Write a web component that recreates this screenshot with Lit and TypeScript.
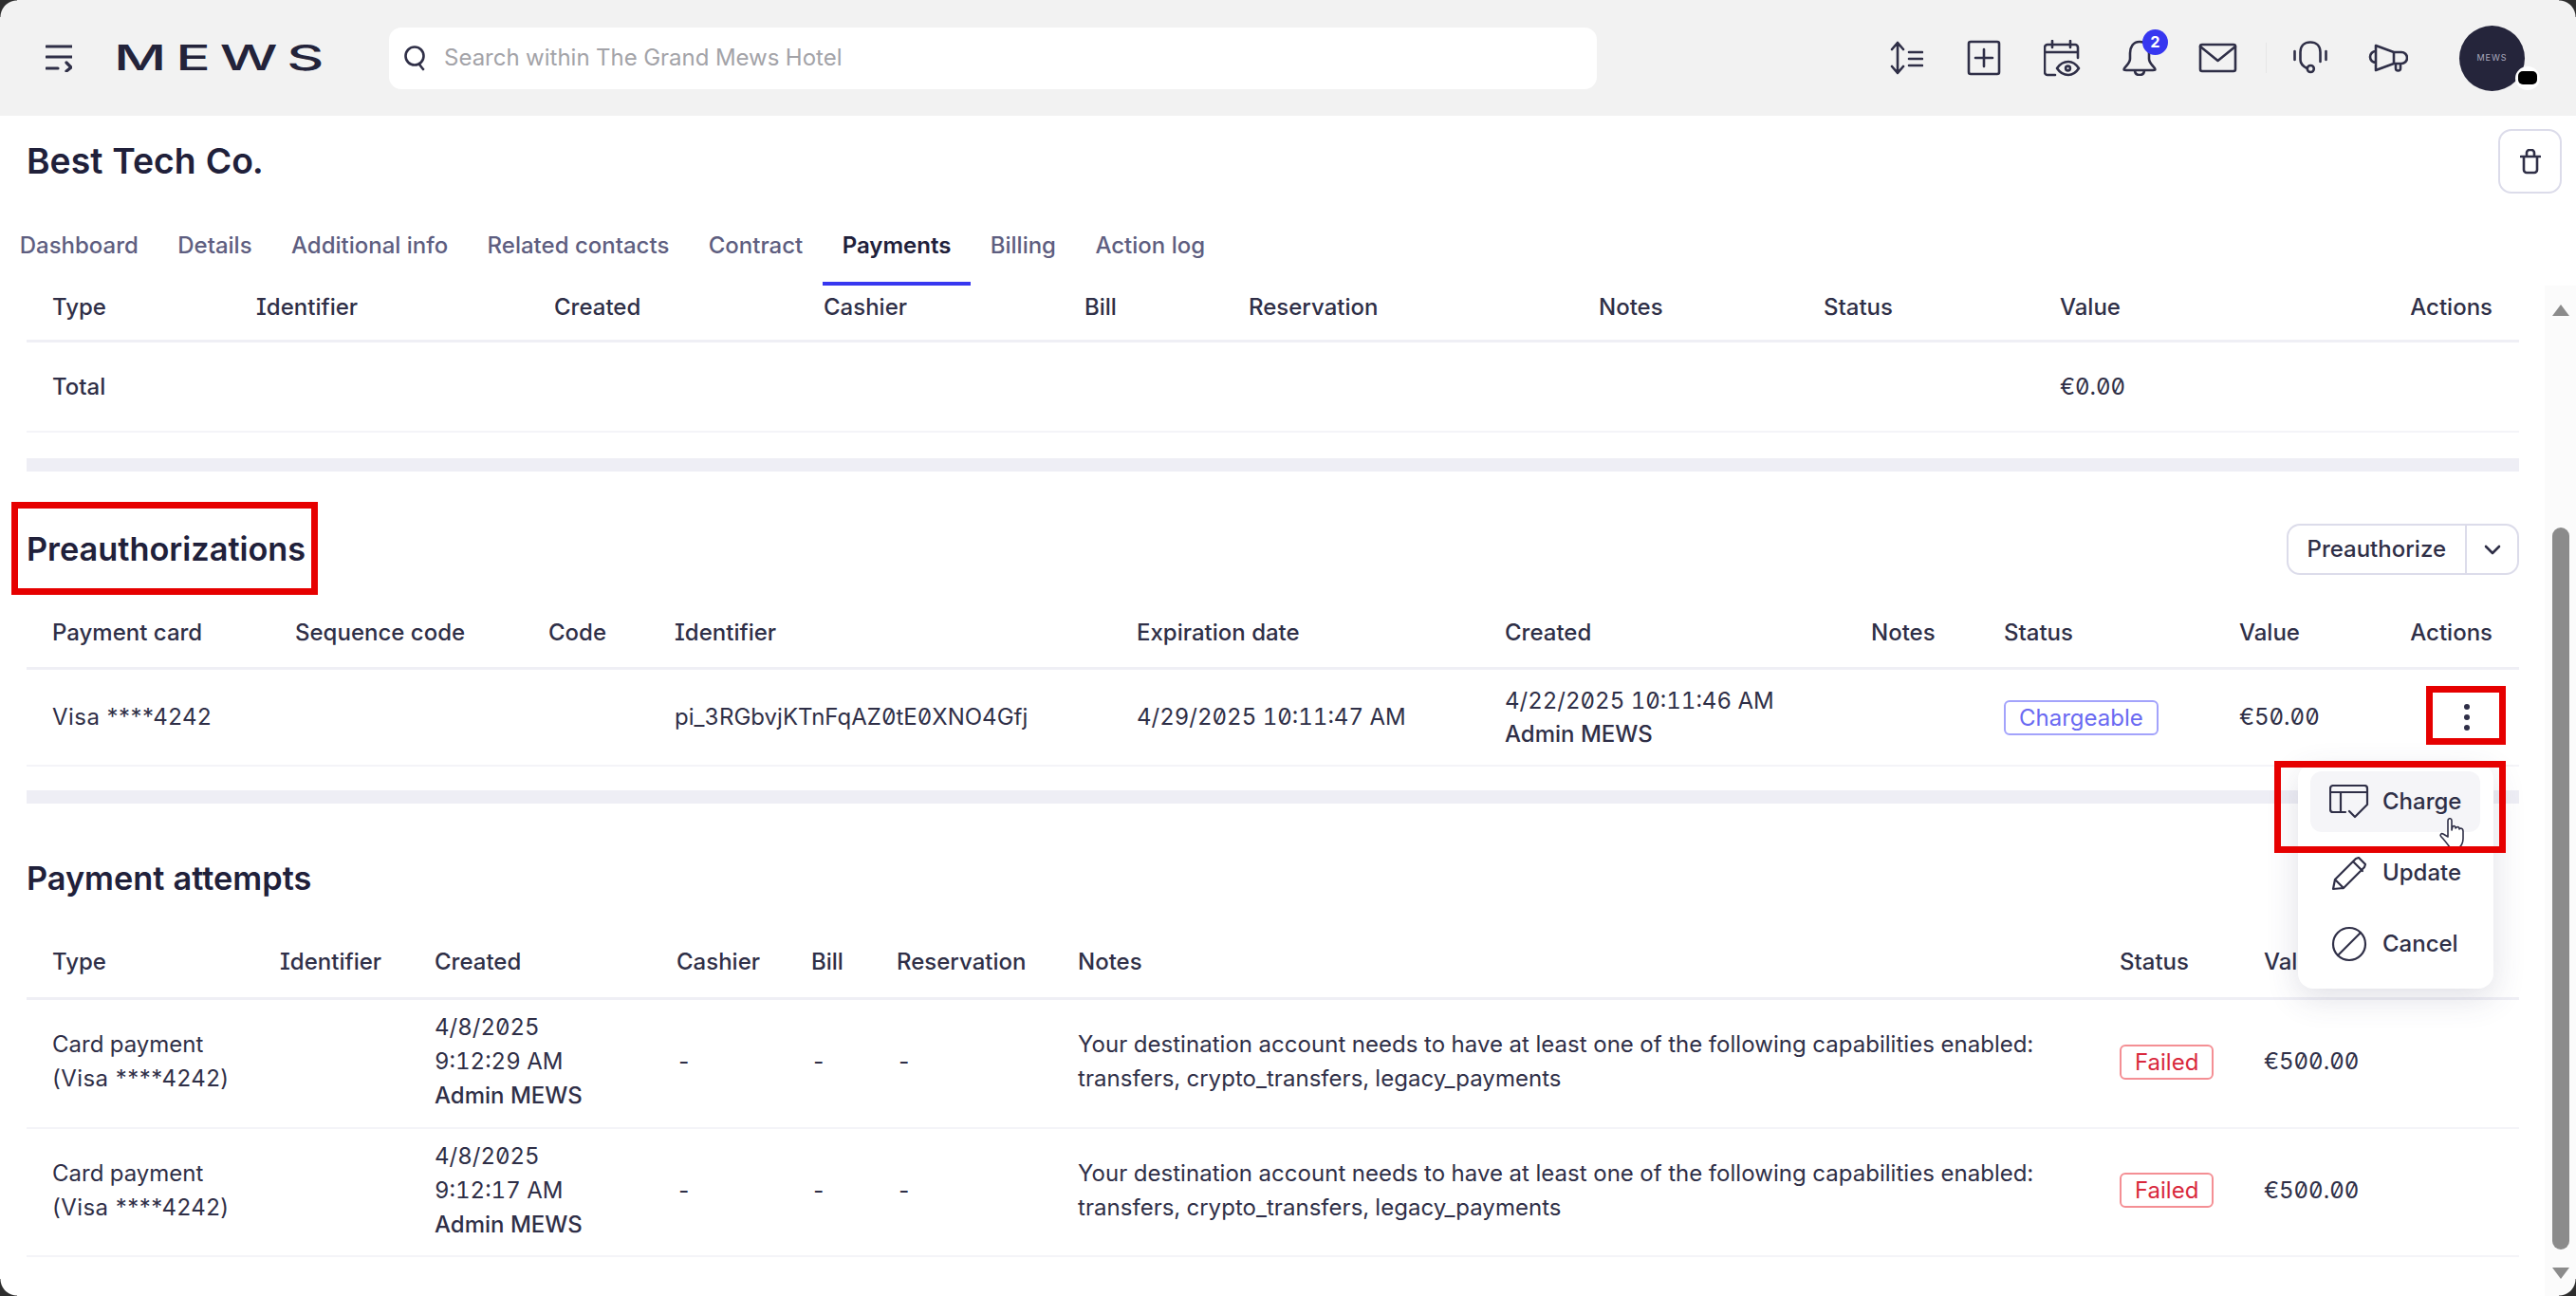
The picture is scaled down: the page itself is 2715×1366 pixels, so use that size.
import { LitElement, css, html, svg } from 'lit'
import { customElement } from 'lit/decorators.js'

const ink = '#2f2f47'

const icons = {
  menu: svg`<path d="M1 3h27M1 14h27M1 26h12M22 20l5 5-5 4"/>`,
  search: svg`<circle cx="12" cy="11" r="9.5"/><path d="M17 20l4 5"/>`,
  sort: svg`<path d="M9 2v32M3 9l6-7 6 7M3 27l6 7 6-7M21 12h14M21 19h14M21 26h14"/>`,
  plus: svg`<rect x="2" y="2" width="32" height="34" rx="2"/><path d="M18 10v18M9 19h18"/>`,
  calendar: svg`<path d="M12 37H4a3 3 0 0 1-3-3V8a3 3 0 0 1 3-3h29a3 3 0 0 1 3 3v11M1 13h35M9 1v7M28 1v7"/><path d="M14 30c3-4.500 7-7 12-7s8 2.500 11 7c-3 4.500-6 7-11 7s-9-2.500-12-7z"/><circle cx="25.500" cy="30" r="2.400"/>`,
  bell: svg`<path d="M18 2c-7 0-10 6-10 12v6c0 4-3 6-6 10-1 2 0 2 2 2h28c2 0 3 0 2-2-3-4-6-6-6-10v-6c0-6-3-12-10-12zM13 32c0 4 2 5 5 5s5-1 5-5"/>`,
  mail: svg`<rect x="2" y="2" width="37" height="28" rx="2"/><path d="M2 4l18.500 15L39 4"/>`,
  headset: svg`<path d="M7.500 20v-8C7.500 5 12 1.500 18 1.500S28.500 5 28.500 12v10M7.500 20c0 4 3 7 7 9M1.500 11v9M34.500 11v9"/><circle cx="18.300" cy="29.500" r="3.500"/>`,
  megaphone: svg`<path d="M8 2l19 7h8a6 6 0 0 1 0 12h-8L8 28zM27 9v12M8 8a6 6 0 0 0 0 12M29 21v5a2.500 2.500 0 0 0 5 0v-5"/>`,
  trash: svg`<path d="M1 8h20M7 8V4a3 3 0 0 1 3-3h2a3 3 0 0 1 3 3v4M4 8v14a3 3 0 0 0 3 3h8a3 3 0 0 0 3-3V8"/>`,
  chevron: svg`<path d="M2 2l7 7 7-7"/>`,
  charge: svg`<path d="M40 21V4a3 3 0 0 0-3-3H4a3 3 0 0 0-3 3v22a3 3 0 0 0 3 3h13M1 8h39M12 8v21M21 28l6 6 13-13"/>`,
  pencil: svg`<path d="M2 35l2-10L26 3l3-1 7 7-1 3-22 22zM4 25l9 9M23 6l10 10"/>`,
  cancel: svg`<circle cx="19" cy="19" r="17"/><path d="M7 31L31 7"/>`,
}

type Cell = string | ReturnType<typeof html>

const stacked = (...lines: Cell[]) =>
  html`${lines.map((l) => html`<div>${l}</div>`)}`

const card = (text: string) => html`<span class="card">${text}</span>`

@customElement('app-root')
export class AppRoot extends LitElement {
  static styles = css`
    :host {
      display: block;
      position: relative;
      width: 2715px;
      height: 1366px;
      overflow: hidden;
      background: #fff;
      color: #2f2f47;
      font-family: Inter, 'Noto Sans', sans-serif;
      font-size: 24px;
      line-height: 30px;
      font-feature-settings: 'tnum', 'zero', 'cv08';
    }
    svg {
      display: block;
      fill: none;
      stroke: currentColor;
      stroke-width: 2.600px;
      stroke-linecap: round;
      stroke-linejoin: round;
    }

    .top {
      display: flex;
      align-items: center;
      height: 122px;
      padding-left: 48px;
      background: #f2f2f2;
    }
    .top .menu-ic {
      width: 28px;
      height: 30px;
      stroke-width: 3.200px;
    }
    .logo {
      width: 220px;
      margin-left: 44px;
      color: #23233a;
      font-size: 37px;
      line-height: 40px;
      font-weight: 500;
      letter-spacing: 6px;
      white-space: nowrap;
    }
    .logo span {
      display: inline-block;
      transform: scaleX(1.64);
      transform-origin: left center;
    }
    .search {
      display: flex;
      align-items: center;
      gap: 18px;
      width: 1273px;
      height: 65px;
      margin-left: 70px;
      padding-left: 15px;
      box-sizing: border-box;
      border-radius: 13px;
      background: #fff;
      color: #a3a3a8;
    }
    .search svg {
      width: 25px;
      height: 27px;
      color: #2f2f47;
    }
    .tools {
      display: flex;
      align-items: center;
      margin-left: auto;
      margin-right: 54px;
    }
    .tool {
      position: relative;
      display: flex;
      align-items: center;
      justify-content: center;
      width: 82px;
    }
    .badge {
      position: absolute;
      left: 44px;
      top: -11px;
      width: 27px;
      height: 27px;
      border-radius: 50%;
      background: #3737f0;
      color: #fff;
      font-size: 16px;
      line-height: 27px;
      font-weight: 700;
      text-align: center;
    }
    .sep {
      width: 1px;
      height: 32px;
      margin: 0 5px 0 10px;
      background: #e6e6e6;
    }
    .avatar {
      position: relative;
      display: flex;
      align-items: center;
      justify-content: center;
      width: 69px;
      height: 69px;
      margin-left: 34px;
      border-radius: 50%;
      background: #25253b;
      color: #a9a9bd;
      font-size: 9px;
      letter-spacing: 1px;
    }
    .avatar i {
      position: absolute;
      right: -16px;
      bottom: 1px;
      display: flex;
      align-items: center;
      justify-content: center;
      width: 26px;
      height: 25px;
      border-radius: 50%;
      background: #fff;
    }
    .avatar i::after {
      content: '';
      width: 20px;
      height: 14px;
      border-radius: 5px;
      background: #000;
    }

    .title {
      display: flex;
      align-items: center;
      justify-content: space-between;
      height: 96px;
      padding: 0 15px 0 28px;
    }
    h1 {
      margin: 0;
      font-size: 37.300px;
      line-height: 44px;
      font-weight: 600;
      color: #20203a;
    }
    .square {
      display: flex;
      align-items: center;
      justify-content: center;
      width: 67px;
      height: 68px;
      box-sizing: border-box;
      border: 2px solid #dcdcea;
      border-radius: 14px;
    }
    .tabs {
      display: flex;
      height: 83px;
      box-sizing: border-box;
    }
    .tab {
      padding: 26px 20.700px 0;
      color: #5e5e80;
      font-weight: 500;
    }
    .tab.on {
      color: #20203a;
      font-weight: 600;
      border-bottom: 4px solid #3737f0;
    }

    .main {
      display: flex;
      height: 1065px;
    }
    .content {
      flex: 1;
      min-width: 0;
      padding: 0 27px 0 28px;
    }
    .rail {
      display: flex;
      flex-direction: column;
      align-items: center;
      width: 33px;
      background: #fbfbfb;
    }
    .thumb {
      width: 18px;
      height: 761px;
      margin-top: 223px;
      border-radius: 9px;
      background: #8b8b8b;
    }
    .up,
    .down {
      width: 0;
      height: 0;
      border-left: 9px solid transparent;
      border-right: 9px solid transparent;
    }
    .up {
      margin-top: 20px;
      border-bottom: 12px solid #8b8b8b;
    }
    .down {
      margin-top: 19px;
      border-top: 12px solid #8b8b8b;
    }

    .row {
      display: grid;
      align-items: center;
      padding: 0 28px 0 27px;
    }
    .pay { grid-template-columns: 215px 314px 284px 275px 173px 369px 237px 249px 1fr auto; }
    .pre { grid-template-columns: 256px 267px 133px 487px 388px 386px 140px 248px 1fr auto; }
    .att { grid-template-columns: 240px 163px 255px 142px 90px 191px 1098px 152px 1fr; }
    .head {
      padding-bottom: 21px;
      border-bottom: 3px solid #efeff5;
      font-weight: 500;
    }
    .body {
      border-bottom: 2px solid #f4f4f8;
    }
    .pay.head { padding-top: 8px; padding-bottom: 19px; }
    .pay.body { height: 95px; padding-top: 1px; box-sizing: border-box; }
    .pre.head { margin-top: 46px; }
    .pre.body { height: 102px; box-sizing: border-box; }
    .att.head { margin-top: 51px; padding-bottom: 22px; }
    .att.body { padding-top: 11px; padding-bottom: 14.600px; line-height: 36px; }
    .stack { line-height: 35px; }
    .by { font-weight: 500; }
    .card { font-feature-settings: 'cv08'; letter-spacing: 0.450px; }
    .note { letter-spacing: 0.040px; }
    .bar {
      height: 14px;
      background: #eeeef5;
    }
    .bar.first { margin-top: 27px; }
    .bar.second { margin-top: 25px; }
    .sec-head {
      display: flex;
      align-items: center;
      justify-content: space-between;
      margin-top: 55px;
    }
    h2 {
      margin: 0;
      font-size: 34.300px;
      line-height: 44px;
      font-weight: 600;
      color: #20203a;
    }
    h2.second { margin-top: 57px; }
    .split {
      display: flex;
      align-items: stretch;
      height: 54px;
      box-sizing: border-box;
      border: 2px solid #dcdcea;
      border-radius: 14px;
      font-weight: 500;
    }
    .split span {
      display: flex;
      align-items: center;
      padding: 0 20px;
      border-right: 2px solid #dcdcea;
    }
    .split div {
      display: flex;
      align-items: center;
      justify-content: center;
      width: 53px;
    }
    .tag {
      display: inline-block;
      height: 37px;
      padding: 0 14px;
      box-sizing: border-box;
      border: 2px solid #a3a3fb;
      border-radius: 6px;
      color: #6a6af2;
      line-height: 33px;
    }
    .tag.bad {
      border-color: #f48f94;
      color: #d9293d;
    }
    .kebab {
      display: flex;
      flex-direction: column;
      gap: 5px;
      padding-right: 24px;
    }
    .kebab b {
      width: 6px;
      height: 6px;
      border-radius: 50%;
      background: #2f2f47;
    }

    .popup {
      position: absolute;
      left: 2422px;
      top: 805px;
      width: 206px;
      height: 237px;
      box-sizing: border-box;
      padding: 8px 14px 0 13px;
      border-radius: 16px;
      background: #fff;
      box-shadow: 0 10px 34px rgba(60, 60, 100, 0.16);
    }
    .item {
      display: flex;
      align-items: center;
      height: 64px;
      margin-bottom: 11px;
      border-radius: 12px;
      font-weight: 500;
    }
    .item.on { background: #f5f5f8; }
    .item .ic {
      display: flex;
      justify-content: center;
      width: 76px;
      padding-left: 5px;
      box-sizing: border-box;
    }
    .item svg { stroke-width: 2.200px; }
    .cursor {
      position: absolute;
      left: 2571px;
      top: 862px;
      width: 28px;
      height: 32px;
      stroke-width: 1.600px;
    }
    .mark {
      position: absolute;
      box-sizing: border-box;
      border: 7px solid #e60000;
    }
    .mark.a { left: 12px; top: 529px; width: 323px; height: 98px; }
    .mark.b { left: 2557px; top: 723px; width: 84px; height: 62px; }
    .mark.c { left: 2397px; top: 802px; width: 244px; height: 97px; }
    .corner {
      position: absolute;
      width: 18px;
      height: 18px;
    }
    .tl { left: 0; top: 0; background: radial-gradient(circle at 100% 100%, transparent 17px, #2e2e2e 18px); }
    .tr { right: 0; top: 0; background: radial-gradient(circle at 0 100%, transparent 17px, #2e2e2e 18px); }
    .bl { left: 0; bottom: 0; background: radial-gradient(circle at 100% 0, transparent 17px, #2e2e2e 18px); }
    .br { right: 0; bottom: 0; background: radial-gradient(circle at 0 0, transparent 17px, #2e2e2e 18px); }
  `

  private icon(name: keyof typeof icons, w: number, h: number) {
    return html`<svg width=${w} height=${h} viewBox="0 0 ${w} ${h}" style="color:${ink}">${icons[name]}</svg>`
  }

  private row(kind: string, cells: Cell[]) {
    return html`<div class="row ${kind}">
      ${cells.map((c) => html`<div>${c}</div>`)}
    </div>`
  }

  private tool(name: keyof typeof icons, w: number, h: number, badge = '') {
    return html`<div class="tool">
      ${this.icon(name, w, h)}
      ${badge ? html`<span class="badge">${badge}</span>` : ''}
    </div>`
  }

  private attempt(time: string) {
    return this.row('att body', [
      stacked('Card payment', card('(Visa ****4242)')),
      '',
      html`<div>4/8/2025</div><div>${time}</div><div class="by">Admin MEWS</div>`,
      '-',
      '-',
      '-',
      html`<div class="note">${stacked(
        'Your destination account needs to have at least one of the following capabilities enabled:',
        'transfers, crypto_transfers, legacy_payments',
      )}</div>`,
      html`<span class="tag bad">Failed</span>`,
      '€500.00',
    ])
  }

  render() {
    const tabs = ['Dashboard', 'Details', 'Additional info', 'Related contacts', 'Contract', 'Payments', 'Billing', 'Action log']
    return html`
      <div class="top">
        <svg class="menu-ic" width="28" height="30" viewBox="0 0 28 30">${icons.menu}</svg>
        <div class="logo"><span>MEWS</span></div>
        <div class="search">
          <svg viewBox="0 0 25 27">${icons.search}</svg>
          <span>Search within The Grand Mews Hotel</span>
        </div>
        <div class="tools">
          ${this.tool('sort', 36, 36)}
          ${this.tool('plus', 36, 38)}
          ${this.tool('calendar', 39, 39)}
          ${this.tool('bell', 36, 38, '2')}
          ${this.tool('mail', 41, 32)}
          <div class="sep"></div>
          ${this.tool('headset', 36, 36)}
          ${this.tool('megaphone', 42, 30)}
          <div class="avatar">MEWS<i></i></div>
        </div>
      </div>

      <div class="title">
        <h1>Best Tech Co.</h1>
        <div class="square">${this.icon('trash', 22, 27)}</div>
      </div>
      <div class="tabs">
        ${tabs.map((t) => html`<div class="tab ${t === 'Payments' ? 'on' : ''}">${t}</div>`)}
      </div>

      <div class="main">
        <div class="content">
          ${this.row('pay head', ['Type', 'Identifier', 'Created', 'Cashier', 'Bill', 'Reservation', 'Notes', 'Status', 'Value', 'Actions'])}
          ${this.row('pay body', [html`<span class="by">Total</span>`, '', '', '', '', '', '', '', '€0.00', ''])}
          <div class="bar first"></div>

          <div class="sec-head">
            <h2>Preauthorizations</h2>
            <div class="split">
              <span>Preauthorize</span>
              <div>${this.icon('chevron', 18, 11)}</div>
            </div>
          </div>
          ${this.row('pre head', ['Payment card', 'Sequence code', 'Code', 'Identifier', 'Expiration date', 'Created', 'Notes', 'Status', 'Value', 'Actions'])}
          ${this.row('pre body', [
            card('Visa ****4242'),
            '',
            '',
            'pi_3RGbvjKTnFqAZ0tE0XNO4Gfj',
            '4/29/2025 10:11:47 AM',
            html`<div class="stack"><div>4/22/2025 10:11:46 AM</div><div class="by">Admin MEWS</div></div>`,
            '',
            html`<span class="tag">Chargeable</span>`,
            '€50.00',
            html`<div class="kebab"><b></b><b></b><b></b></div>`,
          ])}
          <div class="bar second"></div>

          <h2 class="second">Payment attempts</h2>
          ${this.row('att head', ['Type', 'Identifier', 'Created', 'Cashier', 'Bill', 'Reservation', 'Notes', 'Status', 'Value'])}
          ${this.attempt('9:12:29 AM')}
          ${this.attempt('9:12:17 AM')}
        </div>
        <div class="rail">
          <div class="up"></div>
          <div class="thumb"></div>
          <div class="down"></div>
        </div>
      </div>

      <div class="popup">
        <div class="item on"><div class="ic">${this.icon('charge', 42, 36)}</div>Charge</div>
        <div class="item"><div class="ic">${this.icon('pencil', 38, 37)}</div>Update</div>
        <div class="item"><div class="ic">${this.icon('cancel', 38, 38)}</div>Cancel</div>
      </div>
      <svg class="cursor" viewBox="0 0 28 32" style="color:#2f2f47">
        <path fill="#fff" d="M9 3c0-3 4-3 4 0v10l1-4c2-1 3 0 3 2l1-1c2-1 3 0 3 2l1-1c2 0 3 1 3 3v8c0 4-2 8-4 9H11c-3-4-6-8-9-11-2-2 0-4 2-3l5 3z"/>
      </svg>

      <div class="mark a"></div>
      <div class="mark b"></div>
      <div class="mark c"></div>

      <div class="corner tl"></div>
      <div class="corner tr"></div>
      <div class="corner bl"></div>
      <div class="corner br"></div>
    `
  }
}

declare global {
  interface HTMLElementTagNameMap {
    'app-root': AppRoot
  }
}
